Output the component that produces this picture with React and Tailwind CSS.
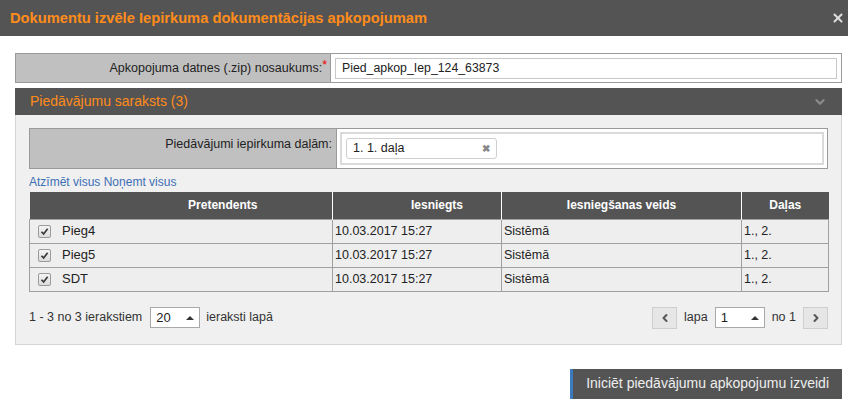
import { X, ChevronDown, ChevronLeft, ChevronRight } from 'lucide-react'

const rows = [
  { name: 'Pieg4', date: '10.03.2017 15:27', type: 'Sistēmā', parts: '1., 2.' },
  { name: 'Pieg5', date: '10.03.2017 15:27', type: 'Sistēmā', parts: '1., 2.' },
  { name: 'SDT', date: '10.03.2017 15:27', type: 'Sistēmā', parts: '1., 2.' },
]

function Check() {
  return (
    <span className="flex items-center justify-center w-[13px] h-[13px] border border-[#9a9a9a] rounded-[2px] bg-gradient-to-b from-[#f4f4f4] to-[#dcdcdc]">
      <svg width="9" height="9" viewBox="0 0 10 10">
        <path d="M1.6 5.3 L4 7.7 L8.5 2" fill="none" stroke="#3a3a3a" strokeWidth="1.9" />
      </svg>
    </span>
  )
}

function SpinSelect({ value }) {
  return (
    <div className="flex items-center w-[50px] h-[21px] border border-[#a9a9a9] bg-white">
      <span className="flex-1 pl-[5px] text-[13px] text-[#222]">{value}</span>
      <span className="w-[18px] h-full flex items-center justify-center">
        <span className="w-0 h-0 border-l-[4px] border-r-[4px] border-b-[4px] border-l-transparent border-r-transparent border-b-[#333]" />
      </span>
    </div>
  )
}

export default function App() {
  return (
    <div className="w-[848px] h-[399px] bg-white font-['Liberation_Sans',Arial,sans-serif] text-[12.5px] text-[#222] overflow-hidden">
      {/* DIALOG HEADER */}
      <div className="flex items-center justify-between h-9 bg-[#545454] pl-[10px] pr-[3px]">
        <h1 className="text-[14.7px] font-bold text-[#ff8c1a]">Dokumentu izvēle Iepirkuma dokumentācijas apkopojumam</h1>
        <X size={14} strokeWidth={3.4} className="text-[#dcdcdc]" />
      </div>

      <div className="ml-[15px] w-[827px] pt-[17px]">
        {/* ZIP NAME */}
        <div className="flex h-[30px] border border-[#9a9a9a]">
          <div className="w-[314px] bg-[#c0c0c0] flex items-center justify-end pr-[3px]">
            Apkopojuma datnes (.zip) nosaukums:<span className="text-[#e00] relative -top-[3px]">*</span>
          </div>
          <div className="flex-1 bg-white border-l border-[#9a9a9a] flex items-center pl-[4px] pr-[4px]">
            <div className="w-[502px] h-[21px] border border-[#c8c8c8] flex items-center pl-[6px] text-[12.3px]">Pied_apkop_Iep_124_63873</div>
          </div>
        </div>

        {/* PANEL */}
        <div className="mt-[5px]">
          <div className="flex items-center justify-between h-[27px] bg-[#545454] pl-[15px] pr-[15px]">
            <span className="text-[14px] text-[#ff8c1a]">Piedāvājumu saraksts (3)</span>
            <ChevronDown size={14} strokeWidth={4} className="text-[#8a8a8a]" />
          </div>
          <div className="bg-[#f0f0f0] border-l border-r border-b border-[#d4d4d4] px-[13px] pt-[13px] pb-[15px]">
            {/* FILTER */}
            <div className="flex h-[41px] border border-[#9a9a9a]">
              <div className="w-[306px] bg-[#c0c0c0] flex justify-end pt-[6px] pr-[4px]">Piedāvājumi iepirkuma daļām:</div>
              <div className="flex-1 bg-white border-l border-[#9a9a9a] p-[3px]">
                <div className="h-full border-2 border-[#dadada] flex items-center pl-[4px]">
                  <div className="flex items-center justify-between w-[151px] h-[21px] border border-[#cfcfcf] rounded-[3px] pl-[6px] pr-[6px]">
                    <span>1. 1. daļa</span>
                    <span className="text-[10px] text-[#888] font-bold">✖</span>
                  </div>
                </div>
              </div>
            </div>

            <div className="pt-[6px] pb-[2px] text-[12px] text-[#3d6fb4] leading-[15px]">
              <span>Atzīmēt visus</span> <span>Noņemt visus</span>
            </div>

            {/* TABLE */}
            <table className="w-[799px] border-collapse table-fixed">
              <colgroup>
                <col className="w-[303px]" />
                <col className="w-[169px]" />
                <col className="w-[240px]" />
                <col className="w-[87px]" />
              </colgroup>
              <thead>
                <tr className="h-[27px] bg-[#545454] text-white font-bold text-[12px]">
                  <th className="border-r border-white pl-[84px]">Pretendents</th>
                  <th className="border-r border-white pl-[40px]">Iesniegts</th>
                  <th className="border-r border-white">Iesniegšanas veids</th>
                  <th>Daļas</th>
                </tr>
              </thead>
              <tbody>
                {rows.map((r) => (
                  <tr key={r.name} className="h-[24px] bg-[#eeeeee]">
                    <td className="border border-[#a0a0a0] pl-[8px]">
                      <div className="flex items-center gap-[11px]">
                        <Check />
                        <span className="text-[13px]">{r.name}</span>
                      </div>
                    </td>
                    <td className="border border-[#a0a0a0] pl-[2px]">{r.date}</td>
                    <td className="border border-[#a0a0a0] pl-[2px]">{r.type}</td>
                    <td className="border border-[#a0a0a0] pl-[2px]">{r.parts}</td>
                  </tr>
                ))}
              </tbody>
            </table>

            {/* PAGER */}
            <div className="flex items-center justify-between w-[799px] mt-[15px] text-[#333]">
              <div className="flex items-center">
                <span className="mr-[8px]">1 - 3 no 3 ierakstiem</span>
                <SpinSelect value="20" />
                <span className="ml-[6px]">ieraksti lapā</span>
              </div>
              <div className="flex items-center gap-[7px]">
                <button className="w-[25px] h-[22px] border border-[#cfcfcf] bg-[#e6e6e6] flex items-center justify-center">
                  <ChevronLeft size={12} strokeWidth={4} className="text-[#555]" />
                </button>
                <span>lapa</span>
                <SpinSelect value="1" />
                <span>no 1</span>
                <button className="w-[25px] h-[22px] border border-[#cfcfcf] bg-[#e6e6e6] flex items-center justify-center">
                  <ChevronRight size={12} strokeWidth={4} className="text-[#555]" />
                </button>
              </div>
            </div>
          </div>
        </div>

        {/* ACTION */}
        <div className="flex justify-end mt-[24px]">
          <button className="h-[30px] bg-[#545454] border-l-[3px] border-[#3b7bbf] px-[13px] text-[14px] text-[#eeeeee]">
            Iniciēt piedāvājumu apkopojumu izveidi
          </button>
        </div>
      </div>
    </div>
  )
}
